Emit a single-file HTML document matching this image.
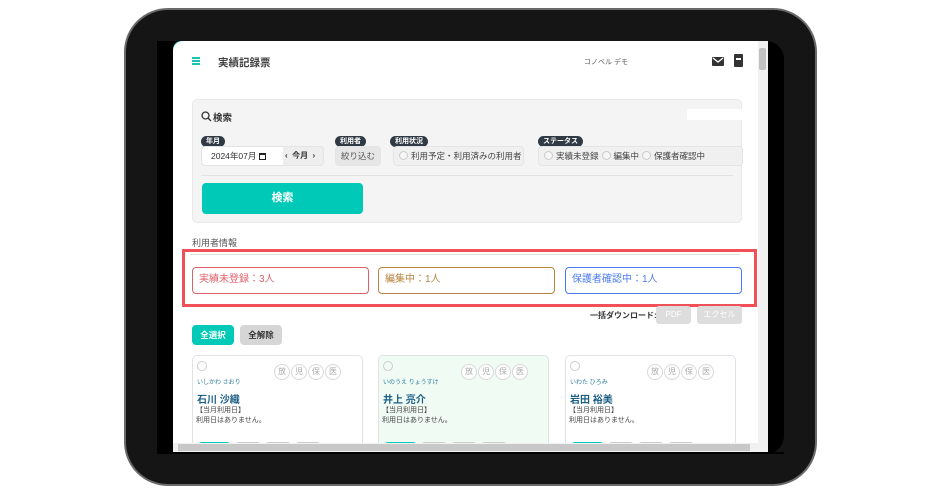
<!DOCTYPE html>
<html><head><meta charset="utf-8"><style>
*{margin:0;padding:0;box-sizing:border-box}
body{width:940px;height:494px;background:#fff;position:relative;overflow:hidden;font-family:"Liberation Sans","Noto Sans CJK JP",sans-serif;color:#333}
.a{position:absolute}
.frame{left:124px;top:8px;width:693px;height:478px;border-radius:44px;background:#151515;border:2px solid #6a6a6a}
.inner{left:157px;top:41px;width:627px;height:413px;background:#000;border-radius:0 18px 18px 0}
.screen{left:173px;top:41px;width:595px;height:411px;background:#fff;border-radius:10px 10px 0 0;overflow:hidden}
.pill{background:#2f3a44;color:#fff;font-size:7px;font-weight:bold;border-radius:7px;height:11px;line-height:11px;padding:0 5px}
.grp{background:#f0f0f0;border:1px solid #e4e4e4;border-radius:4px;height:20px;font-size:8.5px;line-height:18px;color:#444}
.rad{display:inline-block;width:9px;height:9px;border:1px solid #ccc;border-radius:50%;background:#f6f6f6;vertical-align:-1px;margin:0 3px 0 5px}
.st{height:27px;border:1.5px solid;border-radius:4px;font-size:10px;line-height:24px;padding-left:6px;background:#fff}
.card{width:171px;height:100px;border:1.5px solid #dfe3e8;border-radius:5px;background:#fff}
.c{display:inline-block;width:16px;height:16px;border:1px solid #d8d8d8;border-radius:50%;font-size:8px;line-height:14px;text-align:center;color:#aaa;margin-left:1px;background:#fff}
.tag{display:inline-block;height:12px;border:1px solid #ccc;border-radius:5px;font-size:7px;padding:0 6px;color:#aaa;margin-right:2px;background:#fff}
</style></head><body>
<div class="a frame"></div>
<div class="a inner"></div>
<div class="a" style="left:173px;top:41px;width:595px;height:14px;background:#1cc3b0;border-radius:8px 8px 0 0"></div>
<div class="a screen"></div>
<!-- header -->
<div class="a" style="left:192px;top:57px;width:8px;height:1.5px;background:#1cc3b0;box-shadow:0 3px 0 #1cc3b0,0 6px 0 #1cc3b0"></div>
<div class="a" style="left:218px;top:55px;font-size:10.5px;font-weight:bold;color:#444">実績記録票</div>
<div class="a" style="left:584px;top:57px;font-size:7px;color:#555">コノベル デモ</div>
<div class="a" style="left:712px;top:57px;width:12px;height:9px;background:#333;border-radius:1px"></div>
<svg class="a" style="left:712px;top:57px" width="12" height="9"><path d="M1 1 L6 5 L11 1" stroke="#fff" stroke-width="1.3" fill="none"/></svg>
<div class="a" style="left:734px;top:54px;width:9px;height:13px;background:#333;border-radius:1px"></div>
<div class="a" style="left:736px;top:58px;width:5px;height:2px;background:#fff"></div>
<!-- search panel -->
<div class="a" style="left:192px;top:99px;width:550px;height:124px;background:#f4f4f4;border:1px solid #e8e8e8;border-radius:5px"></div>
<div class="a" style="left:687px;top:109px;width:55px;height:11px;background:#fff"></div>
<svg class="a" style="left:201px;top:111px" width="11" height="11"><circle cx="4.5" cy="4.5" r="3.5" stroke="#333" stroke-width="1.3" fill="none"/><path d="M7 7 L10 10" stroke="#333" stroke-width="1.4"/></svg>
<div class="a" style="left:213px;top:110px;font-size:9.5px;font-weight:bold">検索</div>
<div class="a pill" style="left:201px;top:136px">年月</div>
<div class="a pill" style="left:335px;top:136px">利用者</div>
<div class="a pill" style="left:390px;top:136px">利用状況</div>
<div class="a pill" style="left:538px;top:136px">ステータス</div>
<div class="a grp" style="left:201px;top:146px;width:123px;background:#eee"></div>
<div class="a" style="left:202px;top:147px;width:81px;height:18px;background:#fff;border-radius:4px 0 0 4px;font-size:8.5px;line-height:18px;padding-left:9px">2024年07月 <span style="display:inline-block;width:7px;height:7px;border:1.2px solid #222;border-top-width:2px;vertical-align:-1px"></span></div>
<div class="a" style="left:285px;top:147px;font-size:8px;line-height:18px;font-weight:bold">‹ &nbsp;今月 &nbsp;›</div>
<div class="a grp" style="left:335px;top:146px;width:46px;background:#e6e6e6;text-align:center;color:#555">絞り込む</div>
<div class="a grp" style="left:393px;top:146px;width:131px"><span class="rad"></span>利用予定・利用済みの利用者</div>
<div class="a grp" style="left:538px;top:146px;width:205px"><span class="rad"></span>実績未登録<span class="rad" style="margin-left:3px"></span>編集中<span class="rad" style="margin-left:3px"></span>保護者確認中</div>
<div class="a" style="left:201px;top:175px;width:532px;height:1px;background:#e2e2e2"></div>
<div class="a" style="left:202px;top:183px;width:161px;height:31px;background:#00c9b7;border-radius:4px;color:#fff;font-weight:bold;font-size:11px;text-align:center;line-height:31px">検索</div>
<div class="a" style="left:192px;top:236px;font-size:9px;color:#555">利用者情報</div>
<!-- highlight -->
<div class="a" style="left:190px;top:254px;width:550px;height:1px;background:#e0e0e0"></div>
<div class="a st" style="left:192px;top:267px;width:177px;border-color:#e0606a;color:#e0606a">実績未登録：3人</div>
<div class="a st" style="left:378px;top:267px;width:177px;border-color:#b98540;color:#b98540">編集中：1人</div>
<div class="a st" style="left:565px;top:267px;width:177px;border-color:#4d7cf0;color:#4d7cf0">保護者確認中：1人</div>
<div class="a" style="left:182px;top:249px;width:575px;height:58px;border:3px solid #f25058"></div>
<!-- download -->
<div class="a" style="left:590px;top:310px;font-size:8px;font-weight:bold">一括ダウンロード:</div>
<div class="a" style="left:656px;top:306px;width:35px;height:18px;background:#ddd;border-radius:3px;color:#fff;font-size:8px;text-align:center;line-height:18px">PDF</div>
<div class="a" style="left:697px;top:306px;width:45px;height:18px;background:#ddd;border-radius:3px;color:#fff;font-size:8px;text-align:center;line-height:18px">エクセル</div>
<div class="a" style="left:192px;top:325px;width:42px;height:20px;background:#00c9b7;border-radius:4px;color:#fff;font-size:8.5px;font-weight:bold;text-align:center;line-height:20px">全選択</div>
<div class="a" style="left:240px;top:325px;width:42px;height:20px;background:#d6d6d6;border-radius:4px;color:#333;font-size:8.5px;font-weight:bold;text-align:center;line-height:20px">全解除</div>
<!-- cards -->
<div class="a card" style="left:192px;top:355px"></div>
<div class="a card" style="left:378px;top:355px;background:#effbf3"></div>
<div class="a card" style="left:565px;top:355px"></div>
<div class="a" style="left:197px;top:361px;width:10px;height:10px;border:1px solid #ccc;border-radius:50%"></div>
<div class="a" style="left:383px;top:361px;width:10px;height:10px;border:1px solid #ccc;border-radius:50%"></div>
<div class="a" style="left:570px;top:361px;width:10px;height:10px;border:1px solid #ccc;border-radius:50%"></div>
<div class="a" style="left:273px;top:361px"><span class="c">放</span><span class="c">児</span><span class="c">保</span><span class="c">医</span></div>
<div class="a" style="left:460px;top:361px"><span class="c">放</span><span class="c">児</span><span class="c">保</span><span class="c">医</span></div>
<div class="a" style="left:646px;top:361px"><span class="c">放</span><span class="c">児</span><span class="c">保</span><span class="c">医</span></div>
<div class="a" style="left:197px;top:379px;font-size:6px;color:#2a7ba0;line-height:8px">いしかわ さおり</div>
<div class="a" style="left:383px;top:379px;font-size:6px;color:#2a7ba0;line-height:8px">いのうえ りょうすけ</div>
<div class="a" style="left:570px;top:379px;font-size:6px;color:#2a7ba0;line-height:8px">いわた ひろみ</div>
<div class="a" style="left:197px;top:391px;font-size:10px;font-weight:bold;color:#1d5f86">石川 沙織</div>
<div class="a" style="left:383px;top:391px;font-size:10px;font-weight:bold;color:#1d5f86">井上 亮介</div>
<div class="a" style="left:570px;top:391px;font-size:10px;font-weight:bold;color:#1d5f86">岩田 裕美</div>
<div class="a" style="left:196px;top:406px;font-size:7px;line-height:10px;color:#444">【当月利用日】<br>利用日はありません。</div>
<div class="a" style="left:382px;top:406px;font-size:7px;line-height:10px;color:#444">【当月利用日】<br>利用日はありません。</div>
<div class="a" style="left:569px;top:406px;font-size:7px;line-height:10px;color:#444">【当月利用日】<br>利用日はありません。</div>
<div class="a" style="left:197px;top:437px"><span class="tag" style="background:#00c9b7;color:#fff;border-color:#00c9b7">放デイ</span><span class="tag">児発</span><span class="tag">保育</span><span class="tag">医療</span></div>
<div class="a" style="left:383px;top:437px"><span class="tag" style="background:#00c9b7;color:#fff;border-color:#00c9b7">放デイ</span><span class="tag">児発</span><span class="tag">保育</span><span class="tag">医療</span></div>
<div class="a" style="left:570px;top:437px"><span class="tag" style="background:#00c9b7;color:#fff;border-color:#00c9b7">放デイ</span><span class="tag">児発</span><span class="tag">保育</span><span class="tag">医療</span></div>
<!-- scrollbars & bottom mask -->
<div class="a" style="left:758px;top:41px;width:10px;height:402px;background:#f1f1f1"></div>
<div class="a" style="left:759px;top:48px;width:7px;height:22px;background:#c1c1c1;border-radius:2px"></div>
<div class="a" style="left:173px;top:443px;width:595px;height:9px;background:#f1f1f1"></div>
<div class="a" style="left:178px;top:444px;width:572px;height:7px;background:#c8c8c8"></div>
<div class="a" style="left:157px;top:452px;width:627px;height:2px;background:#000"></div>
<div class="a" style="left:150px;top:454px;width:640px;height:24px;background:#151515"></div>
</body></html>
